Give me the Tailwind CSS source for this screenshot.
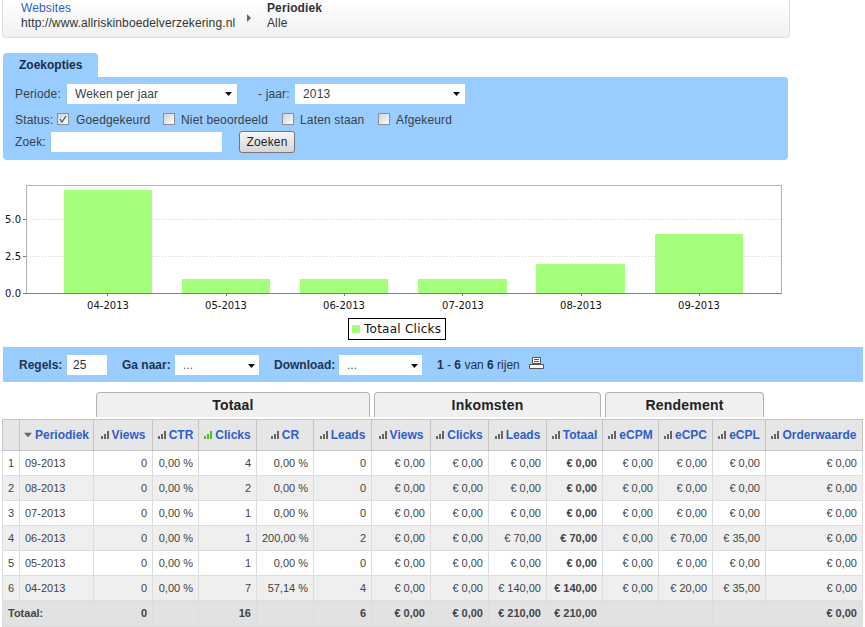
<!DOCTYPE html>
<html lang="nl">
<head>
<meta charset="UTF-8">
<title>Periodiek</title>
<script src="https://cdn.jsdelivr.net/npm/@tailwindcss/browser@4"></script>
</head>
<body class="bg-white font-['Liberation_Sans',Arial,sans-serif] text-[12px] text-[#333] overflow-hidden">
<!-- shared icon for the sortable headers -->
<svg class="hidden"><symbol id="bars" viewBox="0 0 8 8"><path d="M0 5h2v3H0zM3 3h2v5H3zM6 0h2v8H6z" fill="currentColor"/></symbol></svg>

<!-- breadcrumb -->
<div class="ml-[2px] w-[788px] h-[38px] flex border border-t-0 border-[#ddd] rounded-b-sm bg-gradient-to-b from-white to-[#f1f1f1] pl-[18px] leading-[15px] tracking-[0.12px]">
  <div class="w-[226px] pt-px">
    <div class="text-[#2f5fc8]">Websites</div>
    <div class="text-[#333]">http://www.allriskinboedelverzekering.nl</div>
  </div>
  <svg class="w-[4px] h-[8px] mt-[14px]" viewBox="0 0 4 8"><path d="M0 0l4 4-4 4z" fill="#666"/></svg>
  <div class="ml-[16px] pt-px">
    <div class="font-bold text-[#333]">Periodiek</div>
    <div>Alle</div>
  </div>
</div>

<!-- zoekopties -->
<div class="ml-[3px] mt-[15px] w-[95px] h-[24px] bg-[#99ccff] rounded-t-[4px] flex items-center pl-[16px] font-bold text-[#1c2c44]">Zoekopties</div>
<div class="ml-[3px] w-[785px] h-[83px] bg-[#99ccff] rounded-b-[4px] rounded-tr-[4px] pl-[12px] pt-[7px] text-[#3a4048] tracking-[0.15px]">
  <div class="flex items-center h-[20px]">
    <span class="w-[52px]">Periode:</span>
    <div class="relative w-[170px] h-[20px]">
      <select class="appearance-none w-full h-full bg-white pl-[8px] rounded-none"><option>Weken per jaar</option></select>
      <svg class="absolute right-[5px] top-[8px] w-[7px] h-[4px]" viewBox="0 0 7 4"><path d="M0 0h7L3.5 4z" fill="#111"/></svg>
    </div>
    <span class="ml-[21px] w-[37px]">- jaar:</span>
    <div class="relative w-[170px] h-[20px]">
      <select class="appearance-none w-full h-full bg-white pl-[8px] rounded-none"><option>2013</option></select>
      <svg class="absolute right-[5px] top-[8px] w-[7px] h-[4px]" viewBox="0 0 7 4"><path d="M0 0h7L3.5 4z" fill="#111"/></svg>
    </div>
  </div>
  <div class="flex items-center h-[16px] mt-[8px]">
    <span class="w-[42px]">Status:</span>
    <span class="w-[12px] h-[12px] -mt-[3px] border border-[#8a8f96] bg-gradient-to-br from-[#d0d0d0] to-white flex items-center justify-center">
      <svg class="w-[8px] h-[8px]" viewBox="0 0 8 8"><path d="M1 4l2 3 4-6" fill="none" stroke="#4a5a78" stroke-width="1.3"/></svg>
    </span>
    <span class="ml-[7px] w-[87px]">Goedgekeurd</span>
    <span class="w-[12px] h-[12px] -mt-[3px] border border-[#8a8f96] bg-gradient-to-br from-[#d0d0d0] to-white"></span>
    <span class="ml-[6px] w-[101px]">Niet beoordeeld</span>
    <span class="w-[12px] h-[12px] -mt-[3px] border border-[#8a8f96] bg-gradient-to-br from-[#d0d0d0] to-white"></span>
    <span class="ml-[6px] w-[78px]">Laten staan</span>
    <span class="w-[12px] h-[12px] -mt-[3px] border border-[#8a8f96] bg-gradient-to-br from-[#d0d0d0] to-white"></span>
    <span class="ml-[6px]">Afgekeurd</span>
  </div>
  <div class="flex items-center h-[22px] mt-[3px]">
    <span class="w-[36px]">Zoek:</span>
    <input class="w-[171px] h-[20px] bg-white" type="text">
    <button class="ml-[17px] w-[56px] h-[22px] border border-[#777] rounded-[3px] bg-gradient-to-b from-[#f6f6f6] to-[#d6d6d6] text-[#222]">Zoeken</button>
  </div>
</div>

<!-- chart -->
<svg class="block" width="865" height="187" viewBox="0 160 865 187" font-family="'DejaVu Sans',sans-serif" font-size="10" fill="#111">
  <rect x="26.5" y="185.5" width="755" height="108" fill="#fff" stroke="#b4b4b4"/>
  <path d="M27 219.5h754M27 256.5h754" stroke="#d4d4d4" stroke-dasharray="1 2"/>
  <g fill="#a4ff7c">
    <rect x="64" y="190" width="88" height="103"/>
    <rect x="182" y="279" width="88" height="14"/>
    <rect x="300" y="279" width="88" height="14"/>
    <rect x="418" y="279" width="89" height="14"/>
    <rect x="536" y="264" width="89" height="29"/>
    <rect x="655" y="234" width="88" height="59"/>
  </g>
  <path d="M26 293.5h756" stroke="#808080"/>
  <path d="M107.500 293v3M226.500 293v3M344.500 293v3M462.500 293v3M581.500 293v3M699.500 293v3M23 219.500h3M23 256.500h3M23 293.500h3" stroke="#808080"/>
  <g text-anchor="end"><text x="21" y="223">5.0</text><text x="21" y="260">2.5</text><text x="21" y="297">0.0</text></g>
  <g text-anchor="middle">
    <text x="108" y="309">04-2013</text><text x="226" y="309">05-2013</text><text x="344" y="309">06-2013</text>
    <text x="463" y="309">07-2013</text><text x="581" y="309">08-2013</text><text x="699" y="309">09-2013</text>
  </g>
  <rect x="348.500" y="318.500" width="97" height="21" fill="#fff" stroke="#000"/>
  <rect x="352" y="325" width="8" height="8" fill="#a4ff7c"/>
  <text x="364" y="333" font-size="12" letter-spacing=".25">Totaal Clicks</text>
</svg>

<!-- toolbar -->
<div class="ml-[3px] w-[860px] h-[35px] bg-[#99ccff] flex items-center pl-[16px] text-[#24344c]">
  <span class="font-bold w-[48px]">Regels:</span>
  <input class="w-[40px] h-[20px] bg-white pl-[6px]" type="text" value="25">
  <span class="font-bold ml-[15px] w-[53px]">Ga naar:</span>
  <div class="relative w-[84px] h-[20px]">
    <select class="appearance-none w-full h-full bg-white pl-[8px] rounded-none text-[#555]"><option>...</option></select>
    <svg class="absolute right-[4px] top-[9px] w-[7px] h-[4px]" viewBox="0 0 7 4"><path d="M0 0h7L3.5 4z" fill="#111"/></svg>
  </div>
  <span class="font-bold ml-[15px] w-[65px]">Download:</span>
  <div class="relative w-[83px] h-[20px]">
    <select class="appearance-none w-full h-full bg-white pl-[8px] rounded-none text-[#555]"><option>...</option></select>
    <svg class="absolute right-[4px] top-[9px] w-[7px] h-[4px]" viewBox="0 0 7 4"><path d="M0 0h7L3.5 4z" fill="#111"/></svg>
  </div>
  <span class="ml-[15px] w-[92px]"><b>1</b> - <b>6</b> van <b>6</b> rijen</span>
  <svg class="w-[15px] h-[13px] -mt-[3px]" viewBox="0 0 15 13"><path d="M3.500.5h8v6h-8zM5 2.500h5M5 4.500h5M.5 7.500h14v4H.5z" fill="#fff" stroke="#555"/></svg>
</div>

<!-- group tabs -->
<div class="flex mt-[10px] ml-[96px] h-[25px] gap-[4px] text-[14px] font-bold text-[#222] tracking-[0.2px]">
  <div class="w-[274px] flex items-center justify-center rounded-t-[4px] border border-b-0 border-[#b4b4b4] bg-[#f0f0f0]">Totaal</div>
  <div class="w-[227px] flex items-center justify-center rounded-t-[4px] border border-b-0 border-[#b4b4b4] bg-[#f0f0f0]">Inkomsten</div>
  <div class="w-[159px] flex items-center justify-center rounded-t-[4px] border border-b-0 border-[#b4b4b4] bg-[#f0f0f0]">Rendement</div>
</div>

<!-- table -->
<table class="ml-[2px] mt-[2px] w-[860px] table-fixed border-collapse text-[11px] text-[#444] [&_td]:border [&_td]:border-[#ddd] [&_td]:px-[5px] [&_td]:text-right [&_td]:whitespace-nowrap [&_th]:border [&_th]:border-[#c4c4c4] [&_th]:text-[12px] [&_th]:font-bold [&_th]:text-[#2f5fc8] [&_th]:whitespace-nowrap [&_th_svg]:inline [&_th_svg]:w-[8px] [&_th_svg]:h-[8px] [&_th_svg]:mr-[3px] [&_th_svg]:-mt-[2px] [&_th_svg]:text-[#666] [&_th:nth-child(5)_svg]:text-[#55b82e] [&_td:nth-child(11)]:font-bold [&_tfoot_td:first-child]:text-left">
  <colgroup>
    <col class="w-[17px]"><col class="w-[74px]"><col class="w-[59px]"><col class="w-[46px]"><col class="w-[58px]"><col class="w-[57px]"><col class="w-[58px]"><col class="w-[59px]"><col class="w-[58px]"><col class="w-[58px]"><col class="w-[56px]"><col class="w-[56px]"><col class="w-[54px]"><col class="w-[53px]"><col class="w-[97px]">
  </colgroup>
  <thead>
    <tr class="h-[31px] bg-[#e6e6e6]">
      <th></th>
      <th><svg viewBox="0 0 7 4"><path d="M0 0h7L3.500 4z" fill="#666"/></svg>Periodiek</th>
      <th><svg><use href="#bars"/></svg>Views</th>
      <th><svg><use href="#bars"/></svg>CTR</th>
      <th><svg><use href="#bars"/></svg>Clicks</th>
      <th><svg><use href="#bars"/></svg>CR</th>
      <th><svg><use href="#bars"/></svg>Leads</th>
      <th><svg><use href="#bars"/></svg>Views</th>
      <th><svg><use href="#bars"/></svg>Clicks</th>
      <th><svg><use href="#bars"/></svg>Leads</th>
      <th><svg><use href="#bars"/></svg>Totaal</th>
      <th><svg><use href="#bars"/></svg>eCPM</th>
      <th><svg><use href="#bars"/></svg>eCPC</th>
      <th><svg><use href="#bars"/></svg>eCPL</th>
      <th><svg><use href="#bars"/></svg>Orderwaarde</th>
    </tr>
  </thead>
  <tbody class="[&_tr]:h-[25px] [&_tr:nth-child(even)]:bg-[#efefef] [&_td:nth-child(2)]:text-left">
    <tr><td>1</td><td>09-2013</td><td>0</td><td>0,00 %</td><td>4</td><td>0,00 %</td><td>0</td><td>€ 0,00</td><td>€ 0,00</td><td>€ 0,00</td><td>€ 0,00</td><td>€ 0,00</td><td>€ 0,00</td><td>€ 0,00</td><td>€ 0,00</td></tr>
    <tr><td>2</td><td>08-2013</td><td>0</td><td>0,00 %</td><td>2</td><td>0,00 %</td><td>0</td><td>€ 0,00</td><td>€ 0,00</td><td>€ 0,00</td><td>€ 0,00</td><td>€ 0,00</td><td>€ 0,00</td><td>€ 0,00</td><td>€ 0,00</td></tr>
    <tr><td>3</td><td>07-2013</td><td>0</td><td>0,00 %</td><td>1</td><td>0,00 %</td><td>0</td><td>€ 0,00</td><td>€ 0,00</td><td>€ 0,00</td><td>€ 0,00</td><td>€ 0,00</td><td>€ 0,00</td><td>€ 0,00</td><td>€ 0,00</td></tr>
    <tr><td>4</td><td>06-2013</td><td>0</td><td>0,00 %</td><td>1</td><td>200,00 %</td><td>2</td><td>€ 0,00</td><td>€ 0,00</td><td>€ 70,00</td><td>€ 70,00</td><td>€ 0,00</td><td>€ 70,00</td><td>€ 35,00</td><td>€ 0,00</td></tr>
    <tr><td>5</td><td>05-2013</td><td>0</td><td>0,00 %</td><td>1</td><td>0,00 %</td><td>0</td><td>€ 0,00</td><td>€ 0,00</td><td>€ 0,00</td><td>€ 0,00</td><td>€ 0,00</td><td>€ 0,00</td><td>€ 0,00</td><td>€ 0,00</td></tr>
    <tr><td>6</td><td>04-2013</td><td>0</td><td>0,00 %</td><td>7</td><td>57,14 %</td><td>4</td><td>€ 0,00</td><td>€ 0,00</td><td>€ 140,00</td><td>€ 140,00</td><td>€ 0,00</td><td>€ 20,00</td><td>€ 35,00</td><td>€ 0,00</td></tr>
  </tbody>
  <tfoot>
    <tr class="h-[26px] bg-[#e2e2e2] font-bold">
      <td colspan="2">Totaal:</td><td>0</td><td></td><td>16</td><td></td><td>6</td><td>€ 0,00</td><td>€ 0,00</td><td>€ 210,00</td><td>€ 210,00</td><td></td><td></td><td></td><td>€ 0,00</td>
    </tr>
  </tfoot>
</table>
</body>
</html>
